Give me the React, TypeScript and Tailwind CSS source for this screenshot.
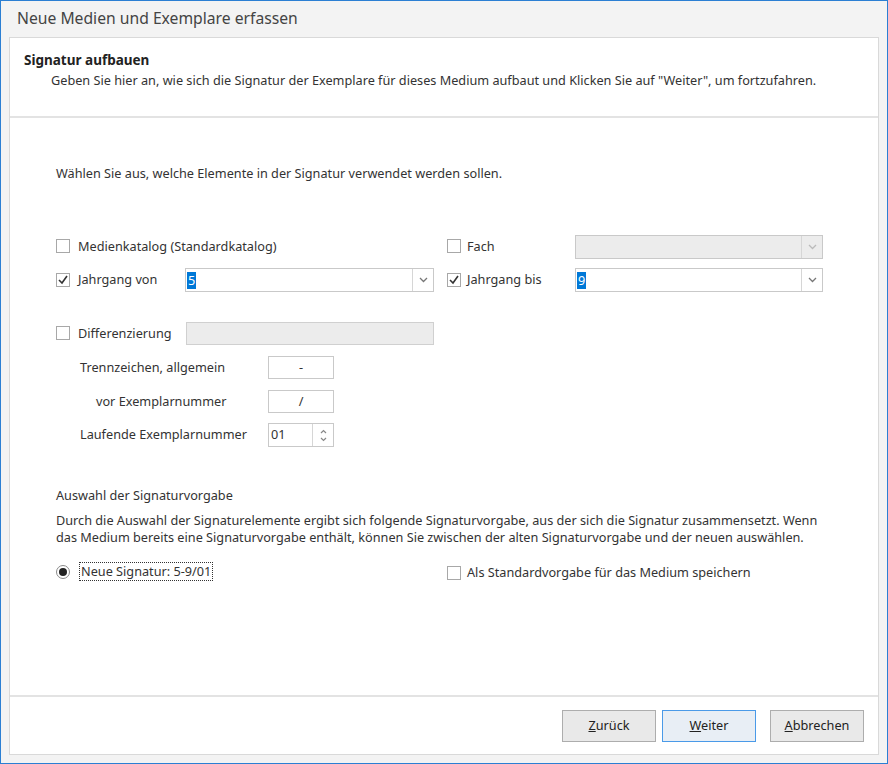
import React from 'react';

const font = { fontFamily: '"Noto Sans", "DejaVu Sans", sans-serif' };

const Check: React.FC<{ checked?: boolean }> = ({ checked }) => (
    <span className="w-[14px] h-[14px] border border-[#a8a8a8] bg-white flex items-center justify-center shrink-0">
        {checked && (
            <svg width="12" height="12" viewBox="0 0 12 12">
                <polyline points="2,6 5,9 10,2" fill="none" stroke="#333" strokeWidth="1.6" />
            </svg>
        )}
    </span>
);

const Chevron: React.FC<{ color?: string }> = ({ color = '#777' }) => (
    <svg width="9" height="6" viewBox="0 0 9 6">
        <polyline points="1,1 4.5,4.5 8,1" fill="none" stroke={color} strokeWidth="1.3" />
    </svg>
);

const Combo: React.FC<{ value?: string; disabled?: boolean; w: string }> = ({ value, disabled, w }) => (
    <div className={`${w} h-[24px] border border-[#c9c9c9] flex ${disabled ? 'bg-[#ececec]' : 'bg-white'}`}>
        <div className="flex-1 flex items-center pl-[1px]">
            {value && <span className="bg-[#0078d7] text-white px-[1px] leading-[17px]">{value}</span>}
        </div>
        <div className="w-[21px] border-l border-[#d6d6d6] flex items-center justify-center">
            <Chevron color={disabled ? '#bbb' : '#777'} />
        </div>
    </div>
);

export default function App() {
    return (
        <div style={font} className="w-[888px] h-[764px] border border-[#2b7fd3] bg-[#f3f3f3] flex flex-col text-[12.7px] text-[#333]">
            <div className="h-[36px] pl-[16px] flex items-center text-[15.7px] text-[#444]">Neue Medien und Exemplare erfassen</div>
            <div className="mx-[8px] mb-[8px] flex-1 border border-[#d9d9d9] bg-white flex flex-col">
                {/* header */}
                <div className="h-[80px] border-b-2 border-[#e3e3e3] pl-[14px] pt-[14px]">
                    <div className="font-bold text-[13.5px] leading-[17px] text-[#222]">Signatur aufbauen</div>
                    <div className="pl-[27px] mt-[2px] leading-[18px]">Geben Sie hier an, wie sich die Signatur der Exemplare für dieses Medium aufbaut und Klicken Sie auf "Weiter", um fortzufahren.</div>
                </div>

                {/* content */}
                <div className="flex-1 pl-[46px] flex flex-col">
                    <div className="mt-[47px] leading-[16px]">Wählen Sie aus, welche Elemente in der Signatur verwendet werden sollen.</div>

                    <div className="mt-[54px] flex items-center h-[23px]">
                        <div className="w-[391px] flex items-center gap-[8px]">
                            <Check />
                            <span>Medienkatalog (Standardkatalog)</span>
                        </div>
                        <div className="w-[128px] flex items-center gap-[6px]">
                            <Check />
                            <span>Fach</span>
                        </div>
                        <Combo w="w-[248px]" disabled />
                    </div>

                    <div className="mt-[10px] flex items-center h-[24px]">
                        <div className="w-[129px] flex items-center gap-[8px]">
                            <Check checked />
                            <span>Jahrgang von</span>
                        </div>
                        <Combo w="w-[249px]" value="5" />
                        <div className="ml-[13px] w-[128px] flex items-center gap-[6px]">
                            <Check checked />
                            <span>Jahrgang bis</span>
                        </div>
                        <Combo w="w-[248px]" value="9" />
                    </div>

                    <div className="mt-[30px] flex items-center h-[23px]">
                        <div className="w-[130px] flex items-center gap-[8px]">
                            <Check />
                            <span>Differenzierung</span>
                        </div>
                        <div className="w-[248px] h-[23px] border border-[#d0d0d0] bg-[#ececec]" />
                    </div>

                    <div className="mt-[11px] flex items-center h-[23px]">
                        <span className="w-[212px] pl-[24px]">Trennzeichen, allgemein</span>
                        <div className="w-[66px] h-[23px] border border-[#c9c9c9] flex items-center justify-center">-</div>
                    </div>
                    <div className="mt-[11px] flex items-center h-[23px]">
                        <span className="w-[212px] pl-[40px]">vor Exemplarnummer</span>
                        <div className="w-[66px] h-[23px] border border-[#c9c9c9] flex items-center justify-center">/</div>
                    </div>
                    <div className="mt-[10px] flex items-center h-[24px]">
                        <span className="w-[212px] pl-[24px]">Laufende Exemplarnummer</span>
                        <div className="w-[66px] h-[24px] border border-[#c9c9c9] flex">
                            <div className="flex-1 flex items-center pl-[2px]">01</div>
                            <div className="w-[21px] border-l border-[#d6d6d6] flex flex-col items-center justify-center gap-[3px]">
                                <svg width="7" height="5" viewBox="0 0 7 5"><polyline points="1,4 3.5,1.5 6,4" fill="none" stroke="#888" strokeWidth="1.2" /></svg>
                                <svg width="7" height="5" viewBox="0 0 7 5"><polyline points="1,1 3.5,3.5 6,1" fill="none" stroke="#888" strokeWidth="1.2" /></svg>
                            </div>
                        </div>
                    </div>

                    <div className="mt-[40px] leading-[16px]">Auswahl der Signaturvorgabe</div>
                    <div className="mt-[9px] flex flex-col">
                        <div className="h-[17px] leading-[17px]">Durch die Auswahl der Signaturelemente ergibt sich folgende Signaturvorgabe, aus der sich die Signatur zusammensetzt. Wenn</div>
                        <div className="h-[17px] leading-[17px]">das Medium bereits eine Signaturvorgabe enthält, können Sie zwischen der alten Signaturvorgabe und der neuen auswählen.</div>
                    </div>

                    <div className="mt-[16px] flex items-center h-[19px]">
                        <div className="w-[391px] flex items-center gap-[9px]">
                            <span className="w-[14px] h-[14px] rounded-full border border-[#8a8a8a] bg-white flex items-center justify-center shrink-0">
                                <span className="w-[8px] h-[8px] rounded-full bg-[#222]" />
                            </span>
                            <span className="border border-dotted border-[#333] px-[1px] leading-[17px]">Neue Signatur: 5-9/01</span>
                        </div>
                        <div className="flex items-center gap-[6px] mt-[3px]">
                            <Check />
                            <span>Als Standardvorgabe für das Medium speichern</span>
                        </div>
                    </div>
                </div>

                {/* footer */}
                <div className="h-[59px] border-t-2 border-[#e3e3e3] flex items-start justify-end pt-[13px] pr-[14px]">
                    <button className="w-[94px] h-[32px] border border-[#adadad] bg-[#e9e9e9] text-[#222]"><u>Z</u>urück</button>
                    <button className="ml-[6px] w-[94px] h-[32px] border border-[#4a9ae8] bg-[#e8eef5] text-[#222]"><u>W</u>eiter</button>
                    <button className="ml-[14px] w-[94px] h-[32px] border border-[#adadad] bg-[#e9e9e9] text-[#222]"><u>A</u>bbrechen</button>
                </div>
            </div>
        </div>
    );
}
